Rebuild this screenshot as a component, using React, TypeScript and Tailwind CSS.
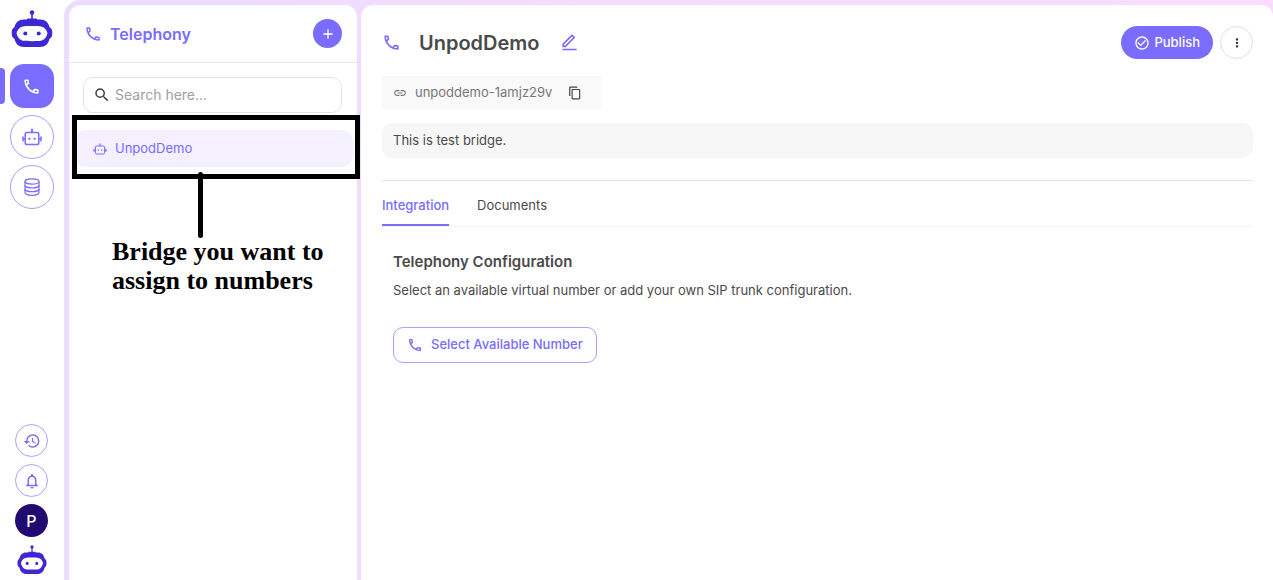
import type { ReactNode } from "react";
import {
  MdAdd,
  MdCheckCircleOutline,
  MdContentCopy,
  MdHistory,
  MdLink,
  MdMoreVert,
  MdOutlineCall,
  MdOutlineNotifications,
  MdSearch,
} from "react-icons/md";
import { RiEditLine } from "react-icons/ri";

function Logo({ className }: { className: string }) {
  return (
    <svg viewBox="0 0 42 37" preserveAspectRatio="none" className={className} aria-hidden="true">
      <circle cx="21" cy="2.5" r="2.3" fill="#3d28d4" />
      <path d="M20.200 3h1.600v6h-1.600zM16.500 8.500h9L27 11H15z" fill="#3d28d4" />
      <path
        d="M13 9.500h16c5.500 0 8.500 3 9.500 7.500l2 2c1 .8 1 7.200 0 8l-2 2c-1.300 5-4.300 8-9.500 8H13c-5.200 0-8.200-3-9.500-8l-2-2c-1-.8-1-7.200 0-8l2-2c1-4.500 4-7.500 9.500-7.500z"
        fill="#3d28d4"
      />
      <path
        d="M12 16.500c3-.6 15-.6 18 0 3.500.5 5.500 3 6.500 6.700-1 3.800-3 6.800-6.500 7.600-3 .5-15 .5-18 0-3.500-.8-5.500-3.800-6.500-7.600C6.500 19.500 8.500 17 12 16.500z"
        fill="#fff"
      />
      <circle cx="14.300" cy="23.500" r="2" fill="#3d28d4" />
      <circle cx="27.700" cy="23.500" r="2" fill="#3d28d4" />
    </svg>
  );
}

function RobotIcon({ className }: { className: string }) {
  return (
    <svg
      viewBox="0 0 20 18"
      fill="none"
      stroke="currentColor"
      strokeWidth="1.500"
      className={className}
      aria-hidden="true"
    >
      <rect x="3.200" y="4.500" width="13.600" height="12" rx="1.800" />
      <path d="M10 .8v3.700" strokeWidth="1.800" />
      <path d="M1 8.500v5M19 8.500v5M1 11h2M17 11h2" />
      <path d="M7.500 9.700v2M12.500 9.700v2" strokeWidth="2" />
    </svg>
  );
}

function DatabaseIcon({ className }: { className: string }) {
  return (
    <svg
      viewBox="0 0 16 18"
      fill="none"
      stroke="currentColor"
      strokeWidth="1.200"
      className={className}
      aria-hidden="true"
    >
      <ellipse cx="8" cy="3.500" rx="7" ry="2.700" />
      <path d="M1 3.500v11c0 1.500 3.100 2.800 7 2.800s7-1.300 7-2.800v-11" />
      <path d="M1 7.200C1 8.700 4.100 10 8 10s7-1.300 7-2.800M1 10.900c0 1.500 3.100 2.800 7 2.800s7-1.300 7-2.800" />
    </svg>
  );
}

function RailButton({ label, size, children }: { label: string; size: "sm" | "lg"; children: ReactNode }) {
  return (
    <button
      type="button"
      aria-label={label}
      className={`flex items-center justify-center rounded-full border border-[#a99fff] text-[#796cff] ${
        size === "lg" ? "size-11" : "size-[33px]"
      }`}
    >
      {children}
    </button>
  );
}

function Rail() {
  return (
    <nav className="flex w-16 shrink-0 flex-col items-center bg-white pt-2.5 pr-px pb-1.5">
      <Logo className="h-[37px] w-[42px]" />
      <div className="relative mt-[17px] flex w-full justify-center">
        <span className="absolute top-1 left-0 h-9 w-[5px] rounded-r bg-[#796cff]" />
        <button
          type="button"
          aria-label="Telephony"
          className="flex size-11 items-center justify-center rounded-[14px] bg-[#796cff] text-white"
        >
          <MdOutlineCall className="size-[19px]" />
        </button>
      </div>
      <div className="mt-[7px] flex flex-col gap-1.5">
        <RailButton label="Agents" size="lg">
          <RobotIcon className="h-[18px] w-5" />
        </RailButton>
        <RailButton label="Knowledge base" size="lg">
          <DatabaseIcon className="h-[18px] w-4" />
        </RailButton>
      </div>
      <div className="mt-auto flex flex-col items-center gap-[7px]">
        <RailButton label="History" size="sm">
          <MdHistory className="size-[18px]" />
        </RailButton>
        <RailButton label="Notifications" size="sm">
          <MdOutlineNotifications className="size-[18px]" />
        </RailButton>
        <button type="button" className="size-[33px] rounded-full bg-[#220b70] text-base font-medium text-white">
          P
        </button>
        <Logo className="mt-px h-[29px] w-[30px]" />
      </div>
    </nav>
  );
}

function BridgeList() {
  return (
    <aside className="w-72 shrink-0 rounded-t-xl bg-white">
      <header className="flex h-[58px] items-center border-b border-[#e8e8e8] px-[15px]">
        <MdOutlineCall className="size-[18px] text-[#796cff]" />
        <h1 className="ml-2 text-base font-semibold text-[#796cff]">Telephony</h1>
        <button
          type="button"
          aria-label="Add bridge"
          className="ml-auto flex size-[29px] items-center justify-center rounded-full bg-[#796cff] text-white"
        >
          <MdAdd className="size-4" />
        </button>
      </header>
      <div className="pt-3.5 pr-[15px] pl-3.5">
        <label className="flex h-9 items-center gap-1 rounded-[10px] border border-[#e3e3e3] px-[9px]">
          <MdSearch className="size-[18px] shrink-0 text-[#444]" />
          <input
            type="search"
            aria-label="Search bridges"
            placeholder="Search here..."
            className="w-full min-w-0 text-sm outline-none placeholder:text-[#a0a0a0]"
          />
        </label>
      </div>
      <div className="relative mt-[17px] px-1">
        <a
          href="#unpoddemo"
          className="flex h-[37px] items-center gap-2 rounded-xl bg-[#f4f0ff] px-5 text-[13px] text-[#796cff]"
        >
          <RobotIcon className="h-3 w-3.5" />
          UnpodDemo
        </a>
        {/* callout around the selected bridge */}
        <div className="absolute -top-[15px] -right-[3px] left-[3px] h-16 border-5 border-black" />
        <div className="absolute top-[42px] left-[129px] h-[66px] w-[5px] rounded-sm bg-black" />
        <p className="absolute top-[107px] left-[43px] font-['Liberation_Serif',serif] text-[26px] leading-[29px] font-bold whitespace-nowrap text-black">
          Bridge you want to
          <br />
          assign to numbers
        </p>
      </div>
    </aside>
  );
}

function BridgeDetail() {
  return (
    <main className="min-w-0 flex-1 rounded-t-xl bg-white pt-[21px] pr-5 pl-[21px]">
      <div className="flex h-[33px] items-center">
        <MdOutlineCall className="size-[19px] text-[#796cff]" />
        <h2 className="ml-[18px] text-xl font-semibold">UnpodDemo</h2>
        <button type="button" aria-label="Rename bridge" className="ml-5 text-[#796cff]">
          <RiEditLine className="size-[19px]" />
        </button>
        <button
          type="button"
          className="ml-auto flex h-[33px] items-center gap-1 rounded-full bg-[#796cff] px-[13px] text-[13px] font-medium text-white"
        >
          <MdCheckCircleOutline className="size-4" />
          Publish
        </button>
        <button
          type="button"
          aria-label="More actions"
          className="ml-[7px] flex size-[33px] items-center justify-center rounded-full border border-[#e0e0e0] text-[#333]"
        >
          <MdMoreVert className="size-3.5" />
        </button>
      </div>

      <div className="mt-[17px] flex h-[33px] w-fit items-center bg-[#f9f9f9] px-[11px] text-[13px] text-[#777]">
        <MdLink className="size-3.5" />
        <span className="ml-2">unpoddemo-1amjz29v</span>
        <button type="button" aria-label="Copy handle" className="mr-2 ml-4 text-[#444]">
          <MdContentCopy className="size-3.5" />
        </button>
      </div>

      <p className="mt-3.5 flex h-[35px] items-center rounded-[10px] bg-[#f7f7f7] px-[11px] text-[13px]">
        This is test bridge.
      </p>

      <div
        role="tablist"
        className="mt-[22px] flex h-[47px] gap-7 border-t border-b border-t-[#e3e3e3] border-b-[#f3f3f3] text-[13px]"
      >
        <button
          type="button"
          role="tab"
          aria-selected="true"
          className="border-b-2 border-[#796cff] pt-1.5 font-medium text-[#796cff]"
        >
          Integration
        </button>
        <button type="button" role="tab" aria-selected="false" className="pt-1">
          Documents
        </button>
      </div>

      <section className="px-[11px] pt-[25px]">
        <h3 className="text-[15px] leading-5 font-semibold">Telephony Configuration</h3>
        <p className="mt-2 text-[13px] leading-5">
          Select an available virtual number or add your own SIP trunk configuration.
        </p>
        <button
          type="button"
          className="mt-[27px] flex h-9 items-center gap-2 rounded-[10px] border border-[#a99fff] px-[13px] text-[13px] font-medium text-[#796cff]"
        >
          <MdOutlineCall className="size-4" />
          Select Available Number
        </button>
      </section>
    </main>
  );
}

export default function App() {
  return (
    <div className="flex min-h-screen bg-white font-['Inter',sans-serif] text-[#4a4a4a]">
      <Rail />
      <div className="flex min-w-0 flex-1 gap-1 rounded-tl-2xl bg-linear-to-r from-[#ecdcff] to-[#fadcff] pt-[5px] pl-[5px]">
        <BridgeList />
        <BridgeDetail />
      </div>
    </div>
  );
}
